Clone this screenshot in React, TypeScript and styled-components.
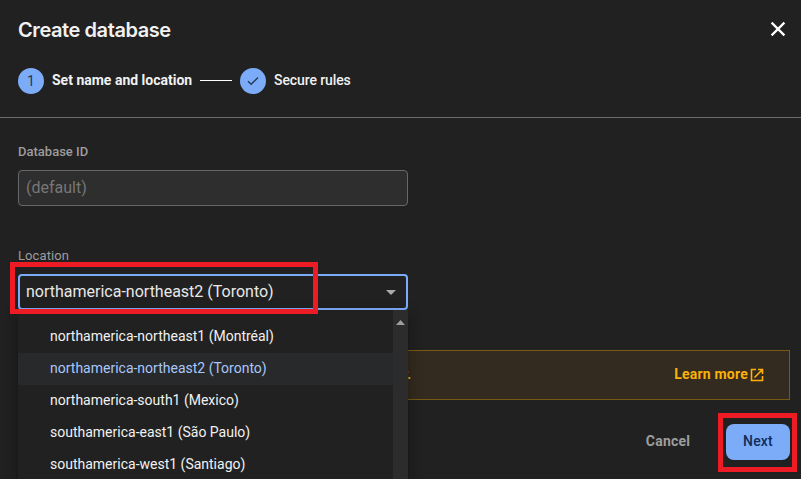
import React from 'react';
import styled, { createGlobalStyle, css } from 'styled-components';

const GlobalStyle = createGlobalStyle`
  * { box-sizing: border-box; }
  body {
    margin: 0;
    background: #212121;
    font-family: Roboto, "Liberation Sans", sans-serif;
    overflow: hidden;
  }
`;

const Dialog = styled.div`
  position: relative;
  width: 801px;
  height: 479px;
  overflow: hidden;
  background: #212121;
  color: #f1f1f1;
`;

const Header = styled.header`
  height: 118px;
  padding: 17px 15px 0 18px;
  border-bottom: 1px solid #6b6b6b;
`;

const TitleRow = styled.div`
  display: flex;
  align-items: center;
  justify-content: space-between;
  height: 26px;
`;

const Title = styled.h1`
  margin: 0;
  font: 600 20px/26px Inter, sans-serif;
  letter-spacing: -0.42px;
  white-space: nowrap;
`;

const CloseButton = styled.button`
  display: flex;
  width: 16px;
  height: 16px;
  margin-top: -2px;
  padding: 0;
  border: 0;
  background: none;
`;

const Stepper = styled.div`
  display: flex;
  align-items: center;
  height: 26px;
  margin-top: 25px;
`;

const StepBadge = styled.span`
  display: flex;
  align-items: center;
  justify-content: center;
  width: 26px;
  height: 26px;
  border-radius: 50%;
  background: #7cacf8;
  color: #28384f;
  font-size: 14px;
`;

const StepLabel = styled.span<{ $width: number; $active?: boolean }>`
  width: ${p => p.$width}px;
  margin: -2px 0 0 8px;
  font-size: 14px;
  line-height: 20px;
  font-weight: ${p => (p.$active ? 700 : 500)};
  letter-spacing: ${p => (p.$active ? 0 : -0.1)}px;
  white-space: nowrap;
`;

const StepLine = styled.span`
  width: 32px;
  height: 1px;
  margin: -1px 8px 0;
  background: #fff;
`;

const Form = styled.main`
  display: flex;
  flex-direction: column;
  padding: 24px 11px 0 18px;
`;

const Label = styled.label<{ $light?: boolean }>`
  height: 20px;
  color: #9d9d9d;
  font-size: 13px;
  line-height: 20px;
  font-weight: ${p => (p.$light ? 400 : 500)};
  letter-spacing: ${p => (p.$light ? 0.1 : 0)}px;
`;

const field = css`
  display: flex;
  align-items: center;
  width: 390px;
  height: 36px;
  border-radius: 4px;
  font-size: 16px;
  font-weight: 400;
`;

const DisabledField = styled.div`
  ${field}
  margin: 8px 0 40px;
  padding: 0 7px 2px;
  border: 1px solid #65686c;
  background: #2e2e2e;
  color: #777;
`;

const SelectWrap = styled.div`
  position: relative;
  width: 390px;
  margin-top: 8px;
`;

const SelectField = styled.div`
  ${field}
  justify-content: space-between;
  padding: 0 10px 2px 6px;
  border: 2px solid #7cacf8;
  color: #e8e8e8;
`;

const Caret = styled.svg`
  margin-top: 3px;
`;

const Menu = styled.div`
  position: absolute;
  z-index: 2;
  top: 36px;
  left: 0;
  display: flex;
  width: 390px;
  height: 180px;
  background: #212121;
  box-shadow: 0 5px 5px -3px rgba(0,0,0,.2), 0 8px 10px 1px rgba(0,0,0,.14), 0 3px 14px 2px rgba(0,0,0,.12);
`;

const Options = styled.div`
  flex: 1;
  padding-top: 11px;
`;

const Option = styled.div<{ $selected?: boolean }>`
  height: 32px;
  padding-left: 32px;
  background: ${p => (p.$selected ? '#28292b' : 'transparent')};
  color: ${p => (p.$selected ? '#a8c7fa' : '#f1f1f1')};
  font-size: 14px;
  line-height: 30px;
  white-space: nowrap;
`;

const ScrollTrack = styled.div`
  display: flex;
  justify-content: center;
  width: 15px;
  padding-top: 10px;
  background: #2c2c2c;
`;

const Notice = styled.div`
  display: flex;
  align-items: center;
  justify-content: space-between;
  width: 772px;
  height: 50px;
  margin-top: 40px;
  padding: 0 25px 2px 361px;
  border: 1px solid #785a12;
  background: #332b1f;
  color: #fbb00b;
  font-size: 14px;
  font-weight: 500;
`;

const LearnMore = styled.a`
  display: flex;
  align-items: center;
  gap: 2px;
  font-weight: 700;
  letter-spacing: 0.22px;

  svg { margin-top: 2px; }
`;

const Actions = styled.footer`
  display: flex;
  justify-content: flex-end;
  gap: 20px;
  margin-top: 24px;
`;

const Button = styled.button<{ $primary?: boolean }>`
  width: ${p => (p.$primary ? 64 : 76)}px;
  height: 36px;
  padding: 0 0 2px;
  border: 0;
  border-radius: 8px;
  background: ${p => (p.$primary ? '#7cacf8' : 'transparent')};
  color: ${p => (p.$primary ? '#102d59' : '#9d9d9d')};
  font: ${p => (p.$primary ? 500 : 700)} 14px Roboto, sans-serif;
  letter-spacing: 0.2px;
`;

const Highlight = styled.div<{ $x: number; $y: number; $w: number; $h: number }>`
  position: absolute;
  z-index: 3;
  left: ${p => p.$x}px;
  top: ${p => p.$y}px;
  width: ${p => p.$w}px;
  height: ${p => p.$h}px;
  border: 5px solid #ed1c24;
  pointer-events: none;
`;

const locations = [
  'northamerica-northeast1 (Montréal)',
  'northamerica-northeast2 (Toronto)',
  'northamerica-south1 (Mexico)',
  'southamerica-east1 (São Paulo)',
  'southamerica-west1 (Santiago)',
];

export default function App() {
  const selected = locations[1];
  return (
    <>
      <GlobalStyle />
      <Dialog>
        <Header>
          <TitleRow>
            <Title>Create database</Title>
            <CloseButton aria-label="Close">
              <svg width="16" height="16" viewBox="0 0 16 16" fill="none" stroke="#fff" strokeWidth="2.2">
                <path d="M1.6 1.6 14.4 14.4M14.4 1.6 1.6 14.4" />
              </svg>
            </CloseButton>
          </TitleRow>
          <Stepper>
            <StepBadge>1</StepBadge>
            <StepLabel $active $width={140}>Set name and location</StepLabel>
            <StepLine />
            <StepBadge>
              <svg width="12" height="10" viewBox="0 0 12 10" fill="none" stroke="#243a5c" strokeWidth="1.4">
                <path d="M1 5.2 4.1 8.3 11 1.4" />
              </svg>
            </StepBadge>
            <StepLabel $width={90}>Secure rules</StepLabel>
          </Stepper>
        </Header>
        <Form>
          <Label>Database ID</Label>
          <DisabledField>(default)</DisabledField>
          <Label $light>Location</Label>
          <SelectWrap>
            <SelectField>
              {selected}
              <Caret width="10" height="5" viewBox="0 0 10 5">
                <path d="M0 0h10L5 5z" fill="#aaa" />
              </Caret>
            </SelectField>
            <Menu>
              <Options>
                {locations.map(name => (
                  <Option key={name} $selected={name === selected}>{name}</Option>
                ))}
              </Options>
              <ScrollTrack>
                <svg width="9" height="5" viewBox="0 0 9 5">
                  <path d="M0 5h9L4.5 0z" fill="#9f9f9f" />
                </svg>
              </ScrollTrack>
            </Menu>
          </SelectWrap>
          <Notice>
            <span>later.</span>
            <LearnMore>
              Learn more
              <svg width="14" height="14" viewBox="0 0 14 14" fill="none" stroke="currentColor" strokeWidth="1.6">
                <path d="M6 1.5H1.5v11h11V8M8 1.5h4.5V6M12.2 1.8 4.5 9.5" />
              </svg>
            </LearnMore>
          </Notice>
          <Actions>
            <Button>Cancel</Button>
            <Button $primary>Next</Button>
          </Actions>
        </Form>
        <Highlight $x={10} $y={262} $w={308} $h={52} />
        <Highlight $x={718} $y={413} $w={79} $h={59} />
      </Dialog>
    </>
  );
}
